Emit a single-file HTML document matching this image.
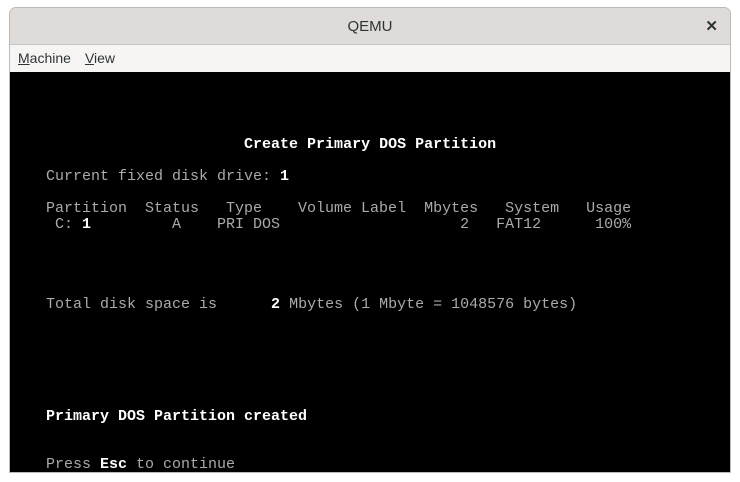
<!DOCTYPE html>
<html><head><meta charset="utf-8"><style>
*{margin:0;padding:0;box-sizing:border-box}
body{width:740px;height:482px;background:#fff;position:relative;overflow:hidden;font-family:"Liberation Sans",sans-serif}
.win{position:absolute;left:9px;top:7px;width:722px;height:466px;border:1px solid #bdbab6;border-radius:7px 7px 0 0;overflow:hidden;background:#f6f5f4}
.title{position:absolute;left:0;top:0;width:720px;height:37px;background:#dedbd8;border-bottom:1px solid #c8c4c0;text-align:center;line-height:37px;font-size:15px;color:#2e3436}
.close{position:absolute;right:12px;top:0;font-size:15px;font-weight:bold;color:#2e3436}
.menu{position:absolute;left:0;top:37px;width:720px;height:27px;font-size:14px;color:#2e3436;line-height:27px;padding-left:8px}
.menu span{margin-right:14px}
.menu u{text-decoration:underline}
.scr{position:absolute;left:0;top:64px;width:720px;height:401px;background:#000;padding-top:1px}
.ln{height:16px;line-height:16px;white-space:pre;font-family:"Liberation Mono",monospace;font-size:15px;color:#aaa}
b{color:#fff;font-weight:bold}
</style></head><body>
<div class="win">
<div class="title">QEMU<span class="close">✕</span></div>
<div class="menu"><span><u>M</u>achine</span><span><u>V</u>iew</span></div>
<div class="scr">
<div class="ln"> </div><div class="ln"> </div><div class="ln"> </div><div class="ln"> </div>
<div class="ln">                          <b>Create Primary DOS Partition</b></div>
<div class="ln"> </div>
<div class="ln">    Current fixed disk drive: <b>1</b></div>
<div class="ln"> </div>
<div class="ln">    Partition  Status   Type    Volume Label  Mbytes   System   Usage</div>
<div class="ln">     C: <b>1</b>         A    PRI DOS                    2   FAT12      100%</div>
<div class="ln"> </div><div class="ln"> </div><div class="ln"> </div><div class="ln"> </div>
<div class="ln">    Total disk space is      <b>2</b> Mbytes (1 Mbyte = 1048576 bytes)</div>
<div class="ln"> </div><div class="ln"> </div><div class="ln"> </div><div class="ln"> </div><div class="ln"> </div><div class="ln"> </div>
<div class="ln"><b>    Primary DOS Partition created</b></div>
<div class="ln"> </div><div class="ln"> </div>
<div class="ln">    Press <b>Esc</b> to continue</div>
</div>
</div>
</body></html>
